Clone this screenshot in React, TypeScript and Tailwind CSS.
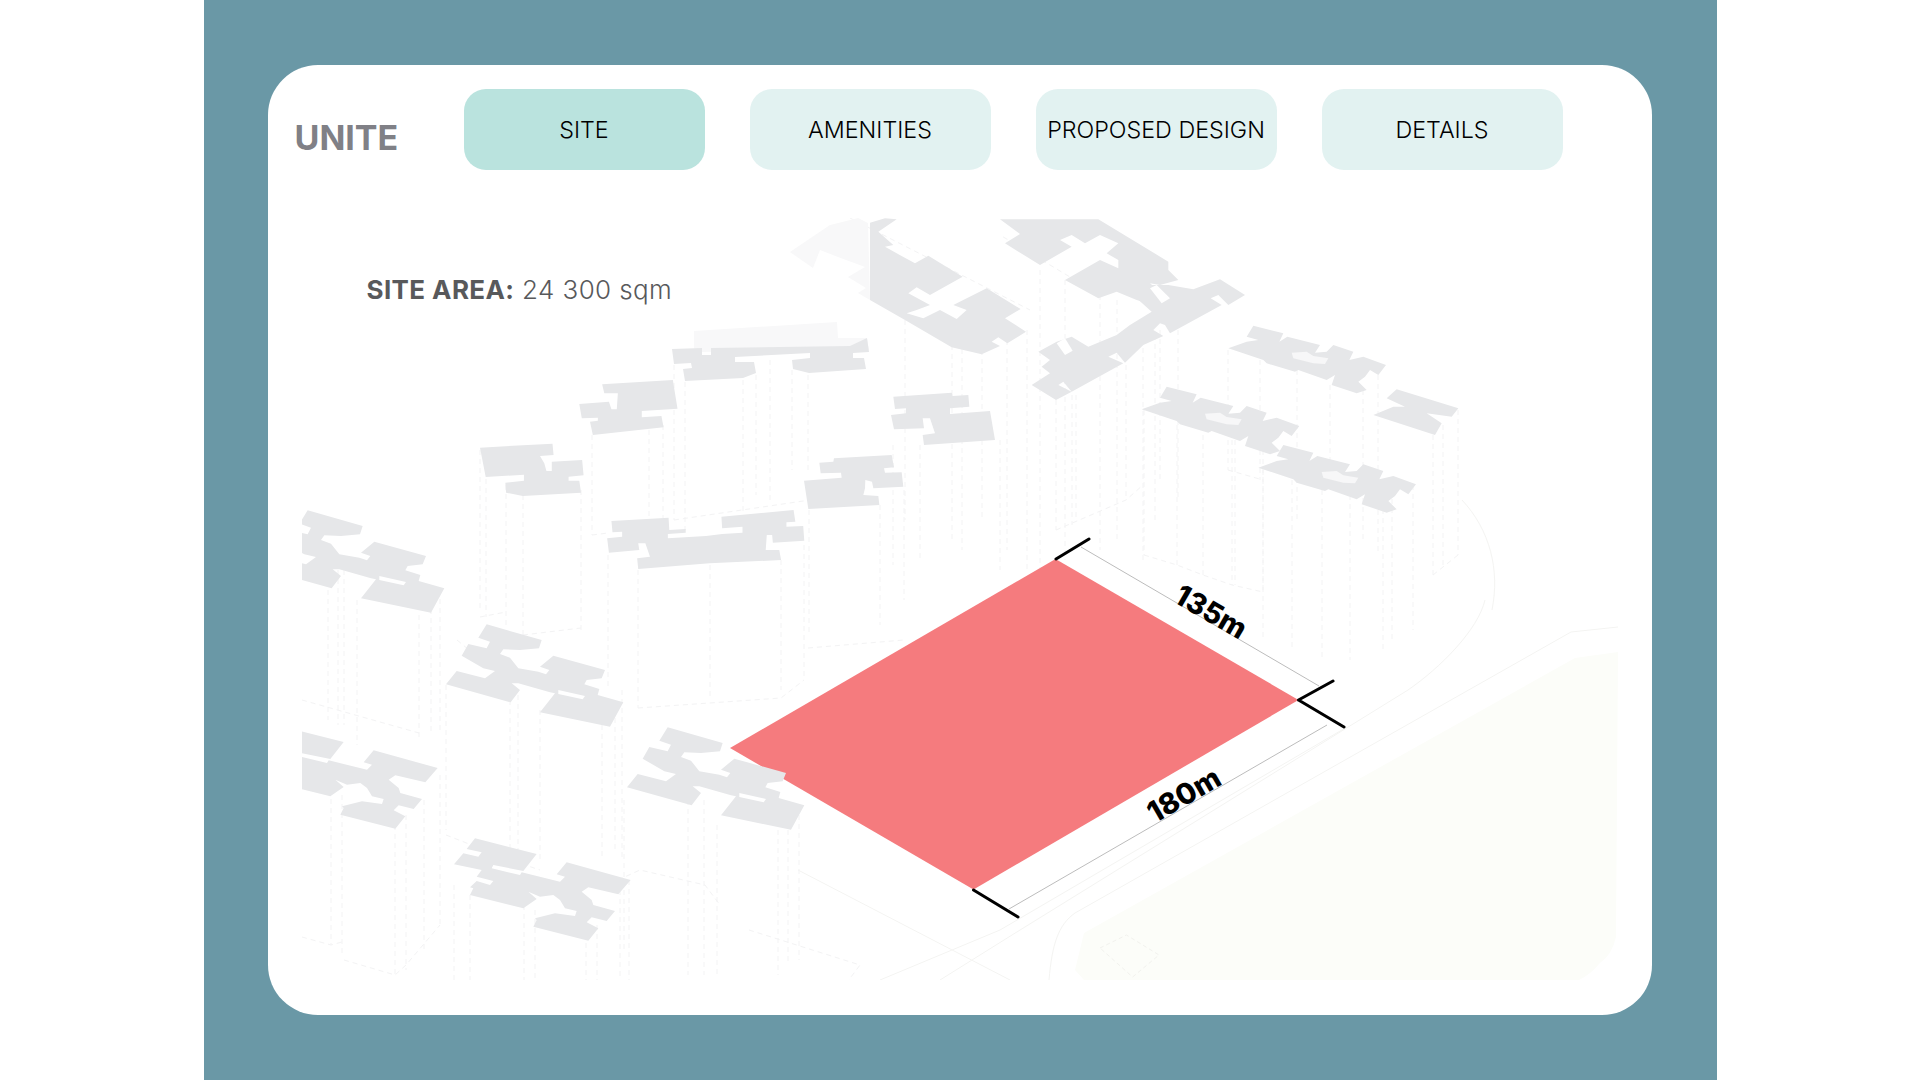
import React from 'react'

const tabs = ['SITE', 'AMENITIES', 'PROPOSED DESIGN', 'DETAILS']

const slabFill = '#e6e7e9'

// slab outlines, traced at 3x so each one is placed with translate + scale(1/3)
const clusterA =
  '140,28 305,75 297,100 240,105 190,103 180,117 210,128 235,160 295,170 318,178 328,165 300,155 340,122 495,165 485,190 440,195 433,208 478,222 473,240 550,262 510,335 300,292 345,235 330,232 235,205 215,205 240,225 212,262 18,208 50,168 135,190 165,168 130,160 65,122 85,87 140,100 150,80 115,68'
const clusterASlot = '355,225 435,243 428,253 355,237'
const clusterB =
  '105,40 290,87 250,138 160,120 155,130 240,150 245,142 360,170 375,155 350,148 380,112 572,165 535,208 445,187 425,200 455,225 460,240 525,258 500,288 455,277 440,292 475,310 445,347 280,305 290,285 285,280 345,265 405,273 410,258 375,250 360,225 340,210 300,215 265,200 290,222 250,250 90,210 100,190 90,187 110,168 150,180 160,168 110,155 125,135 42,118 70,85 115,95 125,82 80,72'
const flatBlock =
  '162,55 335,45 342,82 312,85 315,98 365,97 370,140 280,145 276,125 256,120 255,145 250,165 295,168 298,195 85,207 72,122 185,113 183,98 122,100 118,68 160,65'
const rowBlock =
  '610,47 700,70 688,95 712,80 810,105 795,128 830,125 850,105 910,125 898,150 940,140 1008,165 985,195 960,180 945,200 925,215 950,240 920,250 845,225 855,195 830,210 745,180 735,185 650,160 640,150 535,115 590,95 625,90 590,80'
const rowSlot = '725,128 770,125 790,138 835,145 825,162 790,160 730,145'
const endBlock = '1040,238 1225,295 1205,320 1130,310 1175,340 1155,375 970,315 1030,290 1065,290 1010,265'

// traced from a crop that is 2.8x wide and 3x tall
const tiltedA =
  '532,353 735,341 738,375 700,378 712,400 718,423 733,423 733,395 818,390 822,436 780,440 780,452 810,452 815,488 652,498 605,488 603,458 655,452 655,434 548,441'
const tiltedB =
  '874,163 1072,150 1085,236 985,243 985,262 1040,258 1046,292 848,315 840,275 862,272 862,263 817,265 810,222 893,215 900,238 915,238 918,190 880,190'
const tiltedC =
  '900,573 1060,563 1062,600 1108,597 1108,608 1058,612 1058,625 1165,618 1210,612 1267,608 1267,590 1210,595 1208,560 1410,540 1415,575 1390,577 1390,590 1437,588 1440,632 1352,638 1350,615 1335,615 1332,660 1370,660 1375,690 1175,700 975,717 972,685 1008,680 995,640 975,640 978,660 893,668 888,625 930,620 930,605 903,607'

const shafts: [number, number, number][] = [
  [328, 590, 720], [338, 570, 725], [344, 570, 725], [357, 600, 745], [419, 615, 740], [431, 600, 735], [440, 590, 730],
  [446, 685, 830], [510, 700, 850], [518, 695, 850], [540, 710, 860], [602, 725, 860], [615, 700, 850], [622, 690, 860],
  [480, 450, 610], [486, 470, 617], [506, 485, 625], [523, 495, 635], [581, 490, 632], [592, 435, 535], [649, 430, 525], [663, 425, 520],
  [608, 555, 690], [638, 570, 708], [710, 565, 700], [781, 560, 690], [804, 545, 680],
  [674, 365, 520], [685, 382, 530], [743, 380, 525], [756, 375, 495], [770, 360, 500], [792, 370, 470], [808, 375, 470],
  [809, 510, 635], [880, 505, 625], [904, 490, 600], [893, 445, 565], [920, 445, 560], [1000, 440, 570],
  [905, 320, 520], [952, 345, 540], [962, 340, 550], [982, 350, 520], [1007, 340, 550], [1027, 330, 570], [1040, 270, 580], [1065, 280, 560],
  [1100, 295, 550], [1117, 300, 540], [1143, 330, 560], [1155, 335, 520], [1178, 330, 500], [1126, 365, 500],
  [1056, 400, 530], [1072, 395, 525], [1076, 395, 520], [1160, 330, 480],
  [1144, 410, 555], [1177, 425, 565], [1203, 435, 575], [1232, 440, 585], [1235, 440, 585], [1263, 450, 590],
  [1228, 350, 470], [1260, 360, 480], [1297, 370, 520], [1330, 385, 470], [1363, 390, 540], [1378, 375, 555],
  [1263, 470, 640], [1292, 480, 650], [1322, 490, 660], [1350, 495, 660], [1383, 500, 650], [1392, 490, 640], [1413, 485, 630],
  [1433, 435, 575], [1443, 425, 565], [1458, 410, 555],
  [624, 800, 950], [688, 800, 975], [704, 800, 975], [717, 825, 975], [778, 830, 975], [788, 830, 965], [799, 815, 960],
  [331, 790, 945], [342, 795, 955], [395, 825, 975], [406, 815, 970], [424, 800, 950], [440, 775, 925],
  [454, 885, 980], [470, 895, 980], [524, 905, 980], [535, 910, 980], [586, 925, 980], [597, 925, 980], [620, 890, 980], [629, 880, 980],
]

const slants = [
  'M302 700L419 733', 'M302 937L331 945L342 942', 'M344 960L395 975L406 965L440 925', 'M457 640L481 660', 'M480 617L506 612',
  'M523 635L581 628', 'M592 535L608 533', 'M638 708L781 698L804 680', 'M808 648L904 640', 'M674 520L810 500',
  'M1144 555L1177 565L1203 575L1232 585L1263 592', 'M1228 470L1263 480', 'M1433 575L1458 555', 'M1056 530L1126 500L1143 485',
  'M446 835L510 860L540 870', 'M618 880L640 870L705 885L720 905', 'M749 930L860 965L845 985', 'M1100 295L1000 235', 'M850 218L1030 310',
]

const Slab = ({ x, y, points, slot }: { x: number; y: number; points: string; slot?: string }) => (
  <g transform={`translate(${x} ${y}) scale(${1 / 3})`}>
    <polygon points={points} fill={slabFill} />
    {slot && <polygon points={slot} fill="#ffffff" />}
  </g>
)

const SitePlan = () => (
  <svg width="1316" height="762" viewBox="302 218 1316 762" className="ml-[34px] mt-[48px] block">
    {/* park + road edges */}
    <path d="M1084 933L1575 658L1618 652L1616 937Q1612 955 1600 963Q1590 975 1579 980H1084L1075 970Z" fill="#fcfdf9" />
    <path
      d="M1000 930L1347 727M1012 935L1408 690C1440 668 1478 630 1485 600M1049 980C1052 945 1058 925 1075 913L1571 632L1618 627M1492 610C1500 570 1490 530 1462 500M880 980L1000 930M940 980L1012 935M798 870L1010 980"
      fill="none"
      stroke="#f4f4f2"
      strokeWidth="1"
    />
    <path d="M1100 948L1126.5 935L1159 955L1132.6 977Z" fill="none" stroke="#f2f2ee" strokeWidth="1" strokeDasharray="4 3" />

    {/* dashed tower walls */}
    <g stroke="#f3f3f4" strokeWidth="1" strokeDasharray="5 4" fill="none">
      {shafts.map(([x, y1, y2], i) => (
        <line key={i} x1={x} x2={x} y1={y1} y2={y2} />
      ))}
      {slants.map((d, i) => (
        <path key={i} d={d} />
      ))}
    </g>

    {/* faded slabs */}
    <polygon points="694,331 837,322 838,338 867,338 869,350 694,352" fill="#f8f8f9" />
    <polygon points="790,252 830,225 858,218 868,223 870,300 858,293 866,288 848,277 865,267 838,257 820,250 813,268" fill="#f8f8f9" />

    <polygon points="1055.5,559 1298.5,700 973.5,889.5 730,748" fill="#f57b7e" />

    <Slab x={261} y={501} points={clusterA} slot={clusterASlot} />
    <Slab x={440} y={615} points={clusterA} slot={clusterASlot} />
    <Slab x={621} y={718} points={clusterA} slot={clusterASlot} />
    <Slab x={247} y={713} points={clusterB} />
    <Slab x={440} y={825} points={clusterB} />

    {/* tilted blocks */}
    <g transform={`translate(290 330) scale(${560 / 1568} ${1 / 3})`} fill={slabFill}>
      <polygon points={tiltedA} />
      <polygon points={tiltedB} />
      <polygon points={tiltedC} />
    </g>
    <polygon
      points="672,349 702,348 702,355 711,355 711,348 850,346 867,338 869,352 853,353 853,358 864,358 866,369 809,373 793,369 792,360 810,358 810,353 735,357 735,362 754,362 756,373 743,378 685,381 683,369 692,368 691,363 674,364"
      fill={slabFill}
    />
    <Slab x={780} y={440} points={flatBlock} />
    <g transform={`translate(770 210) scale(${1 / 3})`} fill={slabFill}>
      <polygon points="370,560 545,548 548,558 595,555 598,590 540,595 540,612 660,603 675,690 462,705 458,675 495,670 480,625 458,625 462,655 372,658 363,615 408,610 408,595 375,597" />
    </g>

    {/* iso slabs up top */}
    <g transform={`translate(770 210) scale(${1 / 3})`} fill={slabFill}>
      <polygon points="300,38 345,25 380,28 325,65 370,105 345,110 380,130 435,160 475,137 578,200 480,255 440,232 415,250 480,285 440,300 410,310 460,325 510,300 560,327 590,300 550,285 650,235 752,297 705,325 768,365 712,400 685,382 665,395 690,408 635,433 545,412 405,330 300,270" />
      <polygon points="690,28 985,28 1195,155 1195,180 1225,210 1170,225 1140,220 1200,270 1150,285 1100,270 1040,245 985,265 885,210 990,150 1045,175 1045,150 1010,130 1045,100 990,75 945,100 905,75 870,90 905,110 810,165 705,100 750,72" />
      <polygon points="1145,225 1195,225 1270,238 1350,208 1425,255 1375,285 1345,255 1322,265 1355,285 1200,370 1185,345 1170,340 1150,360 1180,378 1120,405 1065,458 1040,428 1015,440 1060,460 905,545 880,515 865,525 905,545 858,570 785,525 840,490 815,470 840,450 805,425 860,395 905,380 955,410 1040,375 1080,345 1145,305 1100,265 1120,245" />
      <polygon points="1140,235 1160,225 1200,265 1175,280" fill="#ffffff" />
      <polygon points="860,400 885,385 908,422 885,435" fill="#ffffff" />
    </g>
    <g transform={`translate(1050 310) scale(${1 / 3})`} fill={slabFill}>
      <polygon points={rowBlock} />
      <polygon points={rowSlot} fill="#f7f7f8" />
      <g transform="translate(-260 183)">
        <polygon points={rowBlock} />
        <polygon points={rowSlot} fill="#f7f7f8" />
      </g>
      <g transform="translate(90 358)">
        <polygon points={rowBlock} />
        <polygon points={rowSlot} fill="#f7f7f8" />
      </g>
      <polygon points={endBlock} />
    </g>

    {/* dimension lines */}
    <path d="M1081 547L1319 686M1009 909L1327 725" stroke="#bcbcbc" strokeWidth="1" fill="none" />
    <path
      d="M1056 559L1089 539M1298.5 700L1333 681M1298.5 700L1344 727M973.5 890L1018 917"
      stroke="#000000"
      strokeWidth="3"
      strokeLinecap="round"
      fill="none"
    />
    <text x="1211" y="622" textAnchor="middle" transform="rotate(30 1211 612)" className="fill-black text-[29px] font-extrabold">
      135m
    </text>
    <text x="1184" y="805" textAnchor="middle" transform="rotate(-30 1184 795)" className="fill-black text-[29px] font-extrabold">
      180m
    </text>
  </svg>
)

export default function App() {
  return (
    <div className="flex min-h-[1080px] justify-center bg-white font-['Inter',sans-serif]">
      <div className="h-[1080px] w-[1513px] bg-[#6a98a6] pl-[64px] pt-[65px]">
        <div className="relative h-[950px] w-[1384px] rounded-[50px] bg-white pt-[24px]">
          <div className="flex h-[81px] items-start">
            <div className="ml-[27px] mt-[29px] w-[169px] text-[34px] leading-[40px] font-bold text-[#808086]">UNITE</div>
            <div className="flex gap-[45px]">
              {tabs.map((tab, i) => (
                <div
                  key={tab}
                  className={
                    i === 0
                      ? 'flex h-[81px] w-[241px] items-center justify-center rounded-[22px] bg-[#bae3de] pt-[1px] text-[23.3px] font-light text-black'
                      : 'flex h-[81px] w-[241px] items-center justify-center rounded-[22px] bg-[#e2f2f1] pt-[1px] text-[23.3px] font-light text-black'
                  }
                >
                  {tab}
                </div>
              ))}
            </div>
          </div>
          <SitePlan />
          <div className="absolute left-[99px] top-[210px] text-[26px] leading-[30px] font-light tracking-[0.015em] text-[#58595b]">
            <span className="font-bold">SITE AREA:</span> 24 300 sqm
          </div>
        </div>
      </div>
    </div>
  )
}
